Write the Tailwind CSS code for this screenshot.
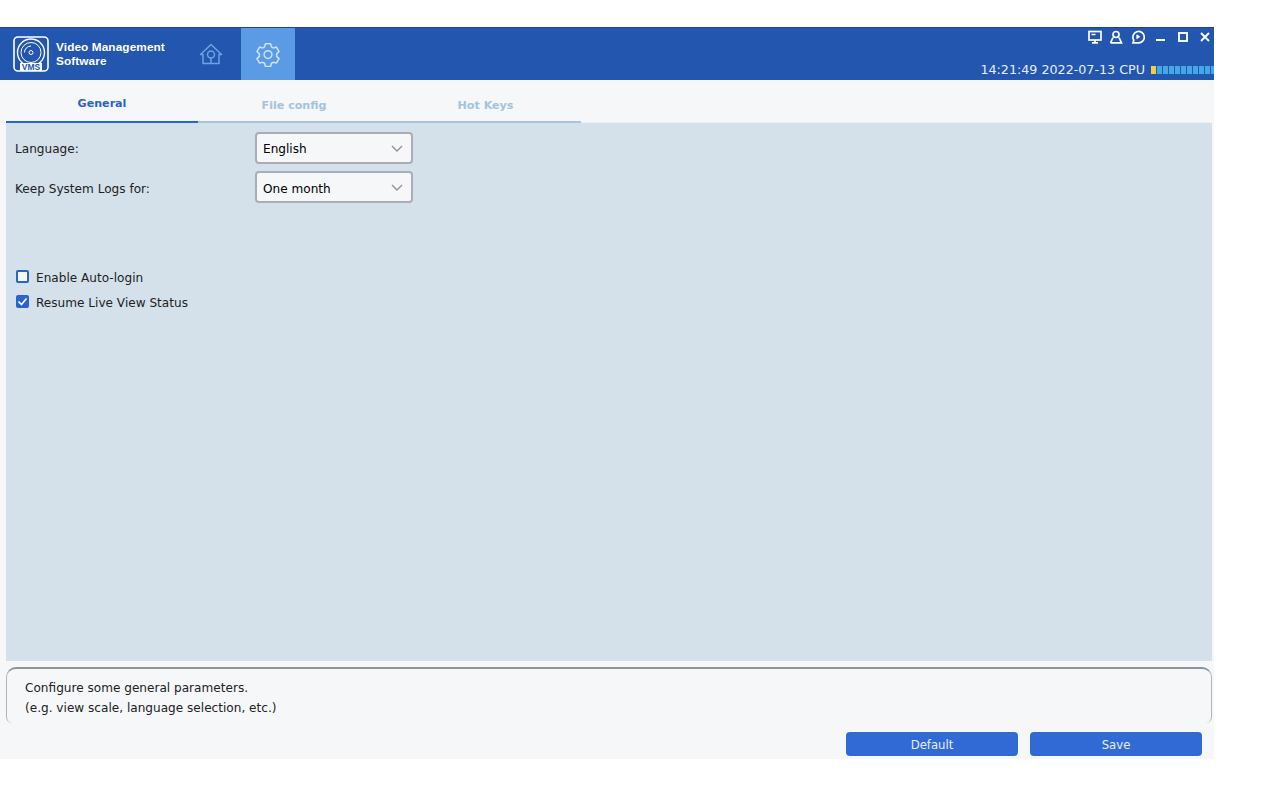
<!DOCTYPE html>
<html lang="en">
<head>
<meta charset="UTF-8" />
<script src="https://cdn.jsdelivr.net/npm/@tailwindcss/browser@4"></script>
<title>Video Management Software</title>
</head>
<body class="bg-white font-['DejaVu_Sans',sans-serif]">
  <div class="w-[1214px] h-[732px] mt-[27px] flex flex-col bg-[#f5f7f9]">
    <!-- Top bar -->
    <header class="h-[53px] bg-[#2356ae] border-t border-[#1b4590] flex shrink-0">
      <div class="w-[241px] flex items-center pl-[13px]">
        <svg width="36" height="36" viewBox="0 0 36 36" fill="none" stroke="white" class="shrink-0">
          <rect x="1" y="1" width="34" height="34" rx="4" stroke-width="1.600"/>
          <circle cx="18" cy="16.500" r="13.500" stroke-width="1.400"/>
          <circle cx="18" cy="16.500" r="10" stroke-width="1"/>
          <path d="M11.500 16.500a6.500 6.500 0 0 1 6.500-6.500" stroke-width="1"/>
          <circle cx="18" cy="16.500" r="2" stroke-width="1"/>
          <rect x="7" y="27" width="22" height="8" fill="white" stroke="none"/>
          <text x="18" y="34.200" text-anchor="middle" font-size="8.500" font-weight="700" fill="#2356ae" stroke="none" font-family="Liberation Sans">VMS</text>
        </svg>
        <div class="ml-[7px] text-white text-[11.800px] leading-[14px] font-bold font-['Liberation_Sans',sans-serif] tracking-[0.1px]">Video Management<br />Software</div>
        <svg width="26" height="26" viewBox="0 0 26 26" fill="none" stroke="#6ea2e6" stroke-width="1.500" stroke-linejoin="round" class="ml-[33px]">
          <path d="M2.500 13.500 13 3.500l10.500 10H21v9H5v-9z"/>
          <circle cx="13" cy="13.500" r="3.500"/>
          <path d="M13 17v5.500"/>
        </svg>
      </div>
      <div class="w-[54px] bg-[#5b9be6] flex items-center justify-center">
        <svg width="26" height="26" viewBox="0 0 24 24" fill="none" stroke="#cfe2fa" stroke-width="1.400" stroke-linejoin="round">
          <path d="M9.600 2.500h4.800l.7 2.900 1.800 1 2.900-.8 2.400 4.100-2.200 2.100v2.400l2.200 2.100-2.400 4.100-2.900-.8-1.800 1-.7 2.900H9.600l-.7-2.900-1.800-1-2.900.8-2.400-4.100 2.200-2.100V11.800L1.800 9.700l2.400-4.100 2.900.8 1.800-1z"/>
          <circle cx="12" cy="12.500" r="3.600"/>
        </svg>
      </div>
      <div class="flex-1 flex flex-col items-end">
        <div class="flex items-center h-[18px] pr-[3px]">
          <svg width="14" height="14" viewBox="0 0 14 14" fill="none" stroke="white" stroke-width="1.700">
            <rect x="1" y="1.500" width="12" height="8.500"/>
            <path d="M4 12.800h6M7 10v2.500M3.500 4.500h4" />
          </svg>
          <svg width="14" height="14" viewBox="0 0 14 14" fill="none" stroke="white" stroke-width="1.700" class="ml-[7px]">
            <circle cx="7" cy="4.500" r="3"/>
            <path d="M1.500 12.800h11L10 7.500M4 7.500l-2.500 5.300"/>
          </svg>
          <svg width="14" height="14" viewBox="0 0 14 14" fill="none" stroke="white" stroke-width="1.700" class="ml-[8px]">
            <path d="M2 12.800l.8-2.600A5.700 5.700 0 1 1 7 12.800z"/>
            <path d="M5.800 4.800l3 2-3 2z" fill="white" stroke-width="0.800"/>
          </svg>
          <svg width="12" height="12" viewBox="0 0 12 12" class="ml-[10px]"><rect x="1" y="8" width="9" height="2" fill="white"/></svg>
          <svg width="12" height="12" viewBox="0 0 12 12" fill="none" stroke="white" stroke-width="1.900" class="ml-[10px]"><rect x="2" y="2" width="8" height="8"/></svg>
          <svg width="12" height="12" viewBox="0 0 12 12" fill="none" stroke="white" stroke-width="1.900" class="ml-[10px]"><path d="M2 2l8 8M10 2l-8 8"/></svg>
        </div>
        <div class="flex items-center mt-[17px] text-[12.700px] text-[#e6eefa] leading-[14px] whitespace-nowrap">
          <span>14:21:49 2022-07-13 CPU</span>
          <div class="flex gap-[1px] ml-[6px]">
            <i class="block w-[5px] h-[8px] bg-[#f4cf3d]"></i>
            <i class="block w-[5px] h-[8px] bg-[#45a7e6]"></i>
            <i class="block w-[5px] h-[8px] bg-[#45a7e6]"></i>
            <i class="block w-[5px] h-[8px] bg-[#45a7e6]"></i>
            <i class="block w-[5px] h-[8px] bg-[#45a7e6]"></i>
            <i class="block w-[5px] h-[8px] bg-[#45a7e6]"></i>
            <i class="block w-[5px] h-[8px] bg-[#45a7e6]"></i>
            <i class="block w-[5px] h-[8px] bg-[#45a7e6]"></i>
            <i class="block w-[5px] h-[8px] bg-[#45a7e6]"></i>
            <i class="block w-[5px] h-[8px] bg-[#45a7e6]"></i>
            <i class="block w-[3px] h-[8px] bg-[#45a7e6]"></i>
          </div>
        </div>
      </div>
    </header>

    <!-- Tabs -->
    <nav class="h-[43px] flex pl-[6px] shrink-0 text-[11.100px] font-bold border-b border-[#eef1f4]">
      <div class="w-[192px] h-[43px] border-b-2 border-[#2a62d0] text-[#2a62c8] text-center leading-[48px]">General</div>
      <div class="w-[192px] h-[43px] border-b-2 border-[#a6c4da] text-[#a3c3dc] text-center leading-[51px]">File config</div>
      <div class="w-[191px] h-[43px] border-b-2 border-[#a6c4da] text-[#a3c3dc] text-center leading-[51px]">Hot Keys</div>
    </nav>

    <!-- Settings panel -->
    <main class="h-[538px] ml-[6px] mr-[2px] bg-[#d4e1eb] pl-[9px] pt-[9px] shrink-0 text-[12.100px] text-[#222]">
      <div class="flex items-center h-[32px]">
        <span class="w-[240px] pt-[2px]">Language:</span>
        <div class="w-[158px] h-[32px] bg-[#f5f7f9] border-2 border-[#a9aeb4] rounded-[4px] flex items-center justify-between pl-[6px] pr-[8px] pt-[2px] text-black">
          English
          <svg width="12" height="8" viewBox="0 0 12 8" fill="none" stroke="#8a949e" stroke-width="1.400"><path d="M1 1l5 5 5-5"/></svg>
        </div>
      </div>
      <div class="flex items-center h-[32px] mt-[7px]">
        <span class="w-[240px] pt-[4px]">Keep System Logs for:</span>
        <div class="w-[158px] h-[32px] bg-[#f5f7f9] border-2 border-[#a9aeb4] rounded-[4px] flex items-center justify-between pl-[6px] pr-[8px] pt-[4px] text-black">
          One month
          <svg width="12" height="8" viewBox="0 0 12 8" fill="none" stroke="#8a949e" stroke-width="1.400" class="mb-[2px]"><path d="M1 1l5 5 5-5"/></svg>
        </div>
      </div>
      <div class="flex items-center h-[16px] mt-[67px] pl-[1px]">
        <span class="w-[13px] h-[13px] mb-[3px] rounded-[2px] border-2 border-[#2a62d0] bg-[#f5f7f9]"></span>
        <span class="ml-[7px]">Enable Auto-login</span>
      </div>
      <div class="flex items-center h-[16px] mt-[9px] pl-[1px]">
        <span class="w-[13px] h-[13px] mb-[3px] rounded-[2px] bg-[#2a62d0] flex items-center justify-center">
          <svg width="11" height="11" viewBox="0 0 11 11" fill="none" stroke="white" stroke-width="1.700"><path d="M1.500 5.500l3 3 5-6"/></svg>
        </span>
        <span class="ml-[7px]">Resume Live View Status</span>
      </div>
    </main>

    <!-- Description -->
    <section class="h-[56px] ml-[6px] mr-[2px] mt-[6px] shrink-0 border-x border-t-2 border-b-0 border-[#8d939a] border-x-[#b0b5ba] rounded-t-[10px] rounded-b-[6px] pl-[18px] pt-[9px] text-[12.100px] leading-[20px] text-[#222]">
      <p>Configure some general parameters.</p>
      <p>(e.g. view scale, language selection, etc.)</p>
    </section>

    <!-- Buttons -->
    <footer class="flex justify-end gap-[12px] pr-[12px] mt-[9px] text-[11.700px] text-[#e8effa]">
      <button class="w-[172px] h-[24px] bg-[#316ad4] rounded-[4px] pt-[4px]">Default</button>
      <button class="w-[172px] h-[24px] bg-[#316ad4] rounded-[4px] pt-[4px]">Save</button>
    </footer>
  </div>
</body>
</html>
